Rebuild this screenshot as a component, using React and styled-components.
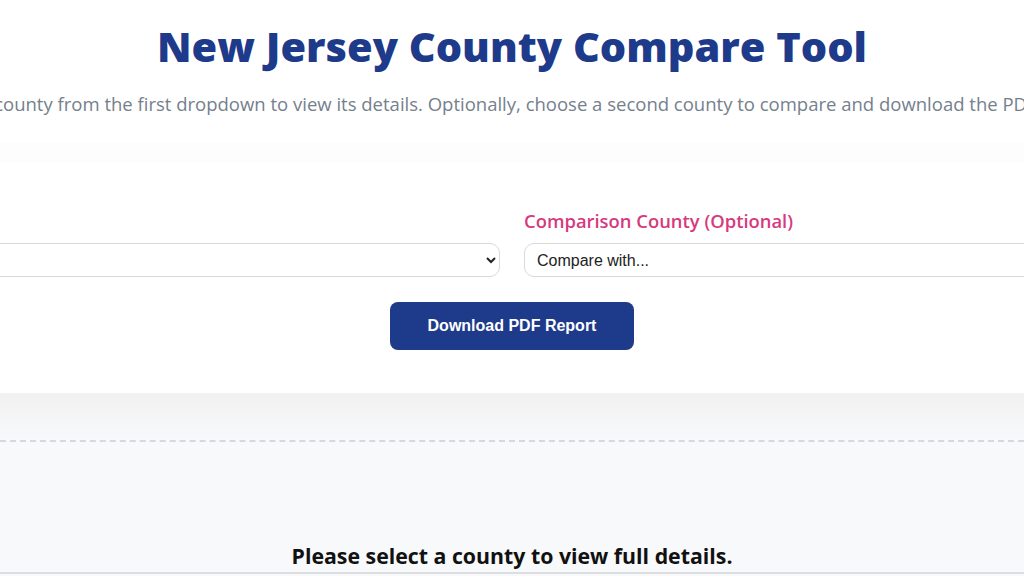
import React from 'react';
import styled, { createGlobalStyle } from 'styled-components';

const GlobalStyle = createGlobalStyle`
  html, body {
    margin: 0;
    padding: 0;
    overflow: hidden;
    background: #f8f9fb;
    font-family: "Open Sans", "Noto Sans", sans-serif;
  }
`;

const Page = styled.div`
  width: 1024px;
  height: 576px;
  overflow: hidden;
  display: flex;
  flex-direction: column;
  background: linear-gradient(
    to bottom,
    #fdfdfd 0,
    #fdfdfd 393px,
    #f1f1f1 393px,
    #f8f9fb 441px
  );
`;

const Header = styled.header`
  background: #ffffff;
  padding: 18px 0 0;
  height: 124px;
  display: flex;
  flex-direction: column;
  align-items: center;
`;

const Title = styled.h1`
  margin: 0;
  font-size: 41.5px;
  line-height: 56px;
  font-weight: 800;
  color: #1e3a8a;
  white-space: nowrap;
`;

const Subtitle = styled.div`
  width: 100%;
  display: flex;
  justify-content: center;
  margin-top: 18px;
  p {
    margin: 0;
    white-space: nowrap;
    font-size: 18.5px;
    line-height: 24px;
    color: #75808d;
  }
`;

const Card = styled.section`
  margin: 21px calc((100% - 1400px) / 2) 0;
  width: 1400px;
  box-sizing: border-box;
  background: #ffffff;
  padding: 46px 0 43px;
  display: flex;
  flex-direction: column;
  align-items: center;
`;

const Fields = styled.div`
  width: 100%;
  display: grid;
  grid-template-columns: 1fr 1fr;
  gap: 24px;
`;

const Field = styled.div`
  display: flex;
  flex-direction: column;
  gap: 10px;
`;

const Label = styled.label`
  font-size: 18.4px;
  line-height: 24px;
  font-weight: 600;
  color: ${(p) => p.color || '#1e3a8a'};
`;

const Select = styled.select`
  height: 34px;
  box-sizing: border-box;
  border: 1px solid #d9d9d9;
  border-radius: 10px;
  background: #ffffff;
  padding: 0 8px;
  font-family: "Liberation Sans", Arial, sans-serif;
  font-size: 16px;
  color: #222;
`;

const Button = styled.button`
  margin-top: 25px;
  width: 244px;
  height: 48px;
  border: none;
  border-radius: 8px;
  background: #1e3a8a;
  color: #ffffff;
  font-family: "Liberation Sans", Arial, sans-serif;
  font-size: 16px;
  font-weight: 700;
  cursor: pointer;
`;

const Placeholder = styled.div`
  margin-top: 47px;
  border-top: 2px dashed #d6d8e0;
  border-bottom: 2px solid #dcdde0;
  background: #f8f9fb;
  padding: 100px 0 2px;
  text-align: center;
  font-size: 21.3px;
  line-height: 28px;
  font-weight: 700;
  color: #111;
  white-space: nowrap;
`;

export default function App() {
  return (
    <Page>
      <GlobalStyle />
      <Header>
        <Title>New Jersey County Compare Tool</Title>
        <Subtitle>
          <p>
            Select a county from the first dropdown to view its details. Optionally, choose a second county
            to compare and download the PDF report.
          </p>
        </Subtitle>
      </Header>
      <Card>
        <Fields>
          <Field>
            <Label>Select County</Label>
            <Select defaultValue="">
              <option value="">Select a county</option>
            </Select>
          </Field>
          <Field>
            <Label color="#d63a7e">Comparison County (Optional)</Label>
            <Select defaultValue="">
              <option value="">Compare with...</option>
            </Select>
          </Field>
        </Fields>
        <Button>Download PDF Report</Button>
      </Card>
      <Placeholder>Please select a county to view full details.</Placeholder>
    </Page>
  );
}
